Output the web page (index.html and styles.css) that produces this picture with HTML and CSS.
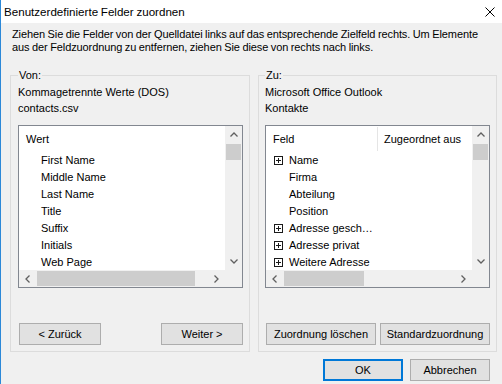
FILE: index.html
```html
<!DOCTYPE html>
<html lang="de">
<head>
    <meta charset="UTF-8">
    <title>Benutzerdefinierte Felder zuordnen</title>
    <link rel="stylesheet" href="styles.css">
</head>
<body>
    <div class="window">
        <div class="titlebar">
            <span class="title">Benutzerdefinierte Felder zuordnen</span>
            <svg class="close" width="10" height="10" viewBox="0 0 10 10">
                <path d="M0.5 0.5 L9.5 9.5 M9.5 0.5 L0.5 9.5" stroke="#000" stroke-width="1" fill="none"/>
            </svg>
        </div>

        <div class="dialog">
            <p class="intro">Ziehen Sie die Felder von der Quelldatei links auf das entsprechende Zielfeld rechts. Um Elemente<br>aus der Feldzuordnung zu entfernen, ziehen Sie diese von rechts nach links.</p>

            <div class="groups">
                <fieldset class="group group-left">
                    <legend>Von:</legend>
                    <div class="source">Kommagetrennte Werte (DOS)</div>
                    <div class="source">contacts.csv</div>

                    <div class="listbox">
                        <div class="list-view">
                            <div class="list-header">
                                <span class="col">Wert</span>
                            </div>
                            <div class="row indent">First Name</div>
                            <div class="row indent">Middle Name</div>
                            <div class="row indent">Last Name</div>
                            <div class="row indent">Title</div>
                            <div class="row indent">Suffix</div>
                            <div class="row indent">Initials</div>
                            <div class="row indent">Web Page</div>
                        </div>
                        <div class="vscroll">
                            <span class="arrow"><svg width="8" height="5" viewBox="0 0 8 5"><path d="M0.5 4.5 L4 1 L7.5 4.5" stroke="#606060" stroke-width="1.3" fill="none"/></svg></span>
                            <div class="vtrack"><div class="vthumb"></div></div>
                            <span class="arrow"><svg width="8" height="5" viewBox="0 0 8 5"><path d="M0.5 0.5 L4 4 L7.5 0.5" stroke="#606060" stroke-width="1.3" fill="none"/></svg></span>
                        </div>
                        <div class="hscroll">
                            <span class="arrow"><svg width="5" height="8" viewBox="0 0 5 8"><path d="M4.5 0.5 L1 4 L4.5 7.5" stroke="#606060" stroke-width="1.3" fill="none"/></svg></span>
                            <div class="htrack"><div class="hthumb thumb-left"></div></div>
                            <span class="arrow"><svg width="5" height="8" viewBox="0 0 5 8"><path d="M0.5 0.5 L4 4 L0.5 7.5" stroke="#606060" stroke-width="1.3" fill="none"/></svg></span>
                        </div>
                        <div class="corner"></div>
                    </div>

                    <div class="group-buttons">
                        <button class="btn btn-nav">&lt; Zurück</button>
                        <button class="btn btn-nav">Weiter &gt;</button>
                    </div>
                </fieldset>

                <fieldset class="group group-right">
                    <legend>Zu:</legend>
                    <div class="source">Microsoft Office Outlook</div>
                    <div class="source">Kontakte</div>

                    <div class="listbox">
                        <div class="list-view">
                            <div class="list-header">
                                <span class="col col-field">Feld</span>
                                <span class="col col-mapped">Zugeordnet aus</span>
                            </div>
                            <div class="row"><svg class="plus" width="9" height="9" viewBox="0 0 9 9"><rect x="0.5" y="0.5" width="8" height="8" fill="none" stroke="#1a1a1a"/><path d="M2 4.5 H7 M4.5 2 V7" stroke="#1a1a1a"/></svg>Name</div>
                            <div class="row indent-tree">Firma</div>
                            <div class="row indent-tree">Abteilung</div>
                            <div class="row indent-tree">Position</div>
                            <div class="row"><svg class="plus" width="9" height="9" viewBox="0 0 9 9"><rect x="0.5" y="0.5" width="8" height="8" fill="none" stroke="#1a1a1a"/><path d="M2 4.5 H7 M4.5 2 V7" stroke="#1a1a1a"/></svg>Adresse gesch…</div>
                            <div class="row"><svg class="plus" width="9" height="9" viewBox="0 0 9 9"><rect x="0.5" y="0.5" width="8" height="8" fill="none" stroke="#1a1a1a"/><path d="M2 4.5 H7 M4.5 2 V7" stroke="#1a1a1a"/></svg>Adresse privat</div>
                            <div class="row"><svg class="plus" width="9" height="9" viewBox="0 0 9 9"><rect x="0.5" y="0.5" width="8" height="8" fill="none" stroke="#1a1a1a"/><path d="M2 4.5 H7 M4.5 2 V7" stroke="#1a1a1a"/></svg>Weitere Adresse</div>
                        </div>
                        <div class="vscroll">
                            <span class="arrow"><svg width="8" height="5" viewBox="0 0 8 5"><path d="M0.5 4.5 L4 1 L7.5 4.5" stroke="#606060" stroke-width="1.3" fill="none"/></svg></span>
                            <div class="vtrack"><div class="vthumb"></div></div>
                            <span class="arrow"><svg width="8" height="5" viewBox="0 0 8 5"><path d="M0.5 0.5 L4 4 L7.5 0.5" stroke="#606060" stroke-width="1.3" fill="none"/></svg></span>
                        </div>
                        <div class="hscroll">
                            <span class="arrow"><svg width="5" height="8" viewBox="0 0 5 8"><path d="M4.5 0.5 L1 4 L4.5 7.5" stroke="#606060" stroke-width="1.3" fill="none"/></svg></span>
                            <div class="htrack"><div class="hthumb thumb-right"></div></div>
                            <span class="arrow"><svg width="5" height="8" viewBox="0 0 5 8"><path d="M0.5 0.5 L4 4 L0.5 7.5" stroke="#606060" stroke-width="1.3" fill="none"/></svg></span>
                        </div>
                        <div class="corner"></div>
                    </div>

                    <div class="group-buttons">
                        <button class="btn btn-map">Zuordnung löschen</button>
                        <button class="btn btn-map">Standardzuordnung</button>
                    </div>
                </fieldset>
            </div>

            <div class="footer">
                <button class="btn btn-dialog btn-default">OK</button>
                <button class="btn btn-dialog">Abbrechen</button>
            </div>
        </div>
    </div>
</body>
</html>
```

FILE: styles.css
```css
html, body {
    margin: 0;
    padding: 0;
    background-color: #f0f0f0;
}

body {
    font-family: "Liberation Sans", Arial, sans-serif;
    font-size: 11px;
    color: #000;
}

.window {
    width: 502px;
    height: 384px;
    box-sizing: border-box;
    border-left: 1px solid #2b88d8;
    background-color: #f0f0f0;
    overflow: hidden;
}

/* title bar */
.titlebar {
    height: 23px;
    background-color: #fff;
    display: flex;
    align-items: center;
    justify-content: space-between;
    padding: 0 7px 0 3px;
}

.title {
    font-size: 11.6px;
    word-spacing: -0.5px;
}

.close {
    display: block;
    margin-top: 1px;
}

/* dialog body */
.dialog {
    padding: 0 5px 0 9px;
}

.intro {
    margin: 5px 0 0 2px;
    line-height: 13px;
    white-space: nowrap;
    letter-spacing: -0.1px;
    word-spacing: -0.4px;
}

.groups {
    display: flex;
    gap: 8px;
    margin-top: 13px;
}

.group {
    margin: 0;
    min-width: 0;
    border: 1px solid #dcdcdc;
    padding: 1px 6px 6px 7px;
    box-sizing: border-box;
}

.group-left {
    width: 240px;
}

.group-right {
    width: 239px;
    padding-left: 6px;
}

.group legend {
    padding: 0 1px;
    line-height: 16px;
}

.source {
    line-height: 16px;
    white-space: nowrap;
}

/* list box with scrollbars */
.listbox {
    margin-top: 9px;
    width: 225px;
    height: 163px;
    box-sizing: border-box;
    border: 1px solid #828790;
    background-color: #fff;
    display: grid;
    grid-template-columns: 1fr 17px;
    grid-template-rows: 1fr 17px;
}

.list-view {
    overflow: hidden;
}

.list-header {
    height: 26px;
    display: flex;
    align-items: center;
}

.col {
    padding-left: 7px;
}

.col-field {
    width: 104px;
    height: 24px;
    line-height: 24px;
    border-right: 1px solid #e5e5e5;
    align-self: flex-start;
    margin-top: 1px;
}

.col-mapped {
    padding-left: 6px;
}

.row {
    height: 17px;
    line-height: 17px;
    display: flex;
    align-items: center;
    white-space: nowrap;
}

.row.indent {
    padding-left: 22px;
}

.row.indent-tree {
    padding-left: 23px;
}

.plus {
    display: block;
    margin: 0 6px 0 8px;
    flex: none;
}

.vscroll {
    background-color: #f0f0f0;
    display: grid;
    grid-template-rows: 17px 1fr 17px;
}

.hscroll {
    background-color: #f0f0f0;
    display: grid;
    grid-template-columns: 17px 1fr 17px;
}

.corner {
    background-color: #f0f0f0;
}

.arrow {
    display: flex;
    align-items: center;
    justify-content: center;
}

.arrow svg {
    display: block;
}

.vthumb {
    margin: 1px 1px 0 1px;
    height: 16px;
    background-color: #cdcdcd;
}

.htrack {
    display: flex;
}

.hthumb {
    margin: 1px 0 1px 1px;
    background-color: #cdcdcd;
}

.thumb-left {
    width: 158px;
}

.thumb-right {
    width: 80px;
}

/* buttons */
.btn {
    font-family: inherit;
    font-size: 11px;
    color: #000;
    height: 22px;
    padding: 0;
    margin: 0;
    box-sizing: border-box;
    background-color: #e1e1e1;
    border: 1px solid #adadad;
    border-radius: 0;
}

.group-buttons {
    display: flex;
    justify-content: space-between;
    margin-top: 35px;
    padding-left: 1px;
    width: 224px;
}

.btn-nav {
    width: 82px;
}

.btn-map {
    width: 110px;
}

.footer {
    display: flex;
    justify-content: flex-end;
    gap: 7px;
    margin-top: 7px;
    padding-right: 7px;
}

.btn-dialog {
    width: 80px;
}

.btn-default {
    border: 2px solid #0078d7;
}
```
